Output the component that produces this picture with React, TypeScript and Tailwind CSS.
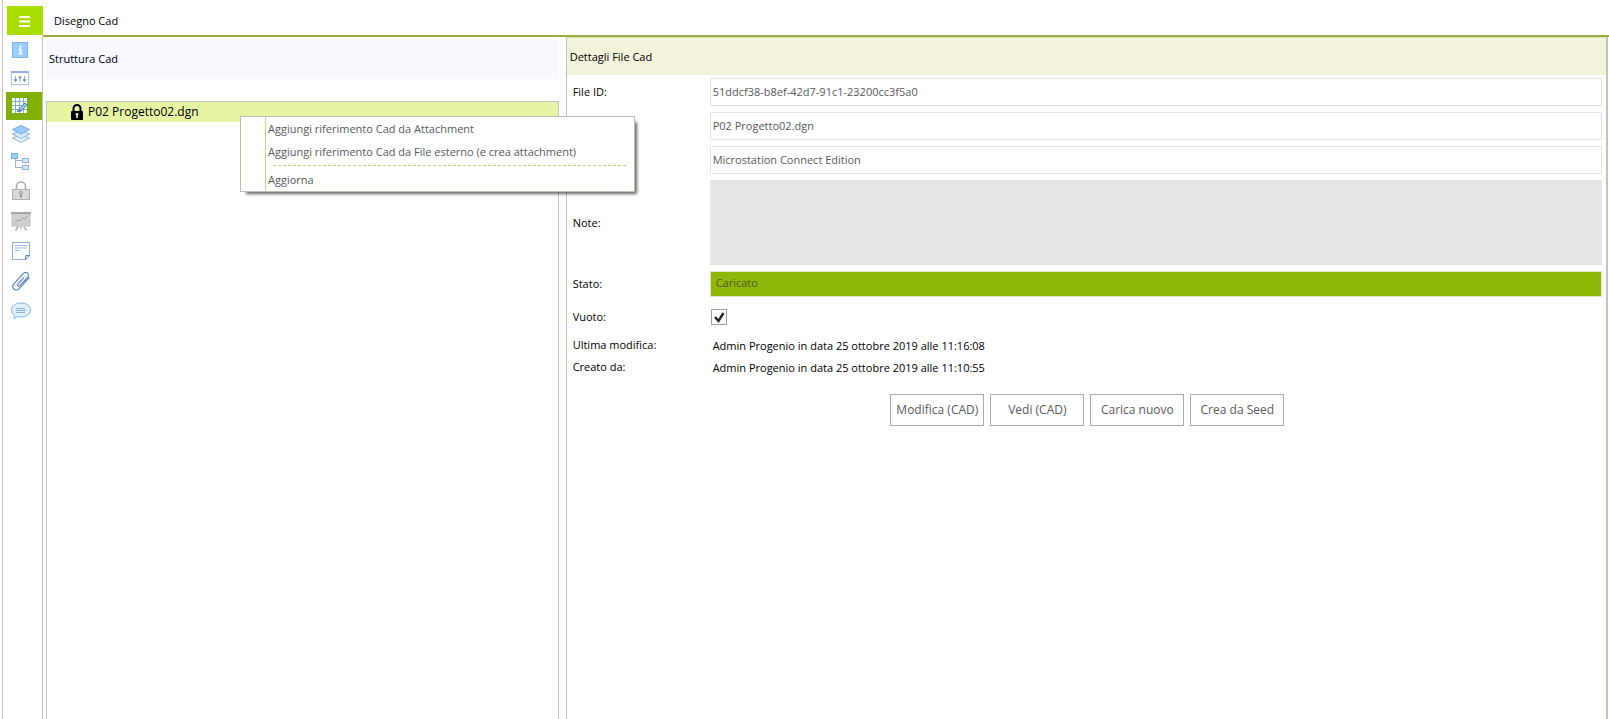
import { useState } from 'react';
import type { ReactNode } from 'react';
import clsx from 'clsx';

const InfoIcon = () => (
  <svg width="20" height="20" viewBox="0 0 20 20">
    <rect x="1.5" y="2.5" width="15" height="15" fill="#99ccff" stroke="#7fb5e8" />
    <path d="M8.5 5.5h2v2h-2zM7.5 8.5h3v5h1v1h-4v-1h1v-4h-1z" fill="#fff" />
  </svg>
);

const SettingsIcon = () => (
  <svg width="20" height="20" viewBox="0 0 20 20" fill="none">
    <rect x="0.5" y="3.5" width="17" height="13" stroke="#a9c6e6" fill="#fff" />
    <path d="M0 4h18" stroke="#8db4e0" strokeWidth="2" />
    <path d="M4.500 8v6.500M9 8v6.500M13.500 8v6.500" stroke="#9fb9dc" />
    <path d="M3 12h3M7.500 9.500h3M12 12h3" stroke="#7d9fd0" strokeWidth="2" />
  </svg>
);

const DrawingIcon = () => (
  <svg width="20" height="20" viewBox="0 0 20 20" fill="none">
    <rect x="1" y="2" width="15" height="15" fill="#fff" />
    <path d="M1 5.500h15M1 9.500h15M1 13.500h15M4.500 2v15M8.500 2v15M12.500 2v15" stroke="#7fb0cc" />
    <path d="M8 13.500l6-6.500 2 2-6 6z" fill="#99ccff" stroke="#3f7fc4" />
    <path d="M6.500 15.500L8 13.500l2 1.500z" fill="#3f7fc4" stroke="#3f7fc4" />
  </svg>
);

const LayersIcon = () => (
  <svg width="20" height="20" viewBox="0 0 20 20" strokeLinejoin="round">
    <path d="M1.500 14L10 10.500 18.500 14 10 18.500z" fill="#e3f1ff" stroke="#8fb6e0" />
    <path d="M1.500 10L10 6.500 18.500 10 10 14.500z" fill="#d3eaff" stroke="#8fb6e0" />
    <path d="M1.500 5.500L10 1.500 18.500 5.500 10 10z" fill="#99ccff" stroke="#79a9dd" />
  </svg>
);

const TreeIcon = () => (
  <svg width="20" height="20" viewBox="0 0 20 20" fill="none">
    <path d="M4.500 6v9.500H11M4.500 8.500H11" stroke="#9fb4cc" />
    <rect x="0.500" y="1.500" width="6" height="5" fill="#99ccff" stroke="#7fabdc" />
    <rect x="11.500" y="6.500" width="6" height="4" fill="#d3eaff" stroke="#8fb6e0" />
    <rect x="11.500" y="13.500" width="6" height="4" fill="#d3eaff" stroke="#8fb6e0" />
  </svg>
);

const LockIcon = () => (
  <svg width="20" height="20" viewBox="0 0 20 20" fill="none">
    <path d="M5.500 8V5.500a4.500 4.500 0 0 1 9 0V8" stroke="#a9a9a9" strokeWidth="1.500" />
    <rect x="1.500" y="8.500" width="17" height="10" fill="#d9d9d9" stroke="#b0b0b0" />
    <circle cx="10" cy="12" r="1.500" stroke="#999" />
    <path d="M10 13.500v3" stroke="#999" strokeWidth="2" />
  </svg>
);

const BoardIcon = () => (
  <svg width="20" height="20" viewBox="0 0 20 20" fill="none">
    <rect x="1" y="2" width="18" height="13" fill="#d0d0d0" stroke="#c0c0c0" />
    <path d="M0 2h20" stroke="#a6a6a6" strokeWidth="2" />
    <path d="M4 11.500l3-2.500 2 1 3-3 1.500 1L16.500 5" stroke="#a0a0a0" />
    <path d="M7 15.500l-2.500 4M13 15.500l2.500 4M10 15.500v2" stroke="#b0b0b0" strokeWidth="1.500" />
  </svg>
);

const NoteIcon = () => (
  <svg width="20" height="20" viewBox="0 0 20 20" fill="none">
    <path d="M1.500 1.500h17V14.500l-4 4h-13z" fill="#fff" stroke="#8fb0dc" />
    <path d="M18.500 14.500h-4v4z" fill="#d3eaff" stroke="#5d88c4" />
    <path d="M4 4.500h12M4 7h12M4 9.500h5" stroke="#9fbbe2" />
  </svg>
);

const ClipIcon = () => (
  <svg width="20" height="20" viewBox="0 0 20 20" fill="none" stroke="#5b88c2" strokeLinecap="round">
    <path d="M12.500 7l-5.500 6c-1.200 1.500.6 3 1.900 1.700L16.500 6.500c3-3.300-1.300-7-4.300-3.800L2.800 12.800c-3.300 3.900 1.900 8.500 5.300 4.800l10-10.800" strokeWidth="1.200" />
    <path d="M14 4.500l-9.700 10" stroke="#b7d2f2" />
  </svg>
);

const ChatIcon = () => (
  <svg width="20" height="20" viewBox="0 0 20 20" fill="none">
    <path d="M10 2c5.500 0 9.500 3 9.500 7s-4 7-9.500 7c-1.500 0-2.700-.2-3.800-.5L3 18l.5-3.700C1.700 13 .5 11.200.5 9 .5 5 4.500 2 10 2z" fill="#dff1ff" stroke="#86b4e4" />
    <path d="M5 7.500h9M5 9.500h10M5 11.500h9" stroke="#8fb0dc" />
  </svg>
);

const Padlock = () => (
  <svg width="12" height="16" viewBox="0 0 12 16" fill="none">
    <path d="M2.500 8V4.500a3.500 3.500 0 0 1 7 0V8" stroke="#000" strokeWidth="2" />
    <rect y="7" width="12" height="9" rx="1" fill="#000" />
    <path d="M6 9a1.300 1.300 0 0 1 .8 2.400V14H5.200v-2.600A1.300 1.300 0 0 1 6 9z" fill="#e6f5a3" />
  </svg>
);

const navItems = [
  { id: 'info', label: 'Informazioni', icon: InfoIcon, size: 'h-7' },
  { id: 'settings', label: 'Impostazioni', icon: SettingsIcon, size: 'h-7' },
  { id: 'drawing', label: 'Disegno Cad', icon: DrawingIcon, size: 'h-7' },
  { id: 'layers', label: 'Livelli', icon: LayersIcon, size: 'h-7' },
  { id: 'tree', label: 'Struttura', icon: TreeIcon, size: 'h-7' },
  { id: 'lock', label: 'Permessi', icon: LockIcon, size: 'h-[30px]' },
  { id: 'board', label: 'Presentazione', icon: BoardIcon, size: 'h-[30px]' },
  { id: 'note', label: 'Note', icon: NoteIcon, size: 'h-[30px]' },
  { id: 'clip', label: 'Allegati', icon: ClipIcon, size: 'h-[30px]' },
  { id: 'chat', label: 'Commenti', icon: ChatIcon, size: 'h-[30px]' },
];

const actions = ['Modifica (CAD)', 'Vedi (CAD)', 'Carica nuovo', 'Crea da Seed'];

const fieldClass = 'h-7 w-full border border-[#e3e3e6] bg-white px-0.5 pb-0.5 text-[#5a5a5a] outline-none';

function MenuItem({ children }: { children: ReactNode }) {
  return (
    <button role="menuitem" className="block h-[23px] w-full pl-[27px] text-left hover:bg-[#e6f5a3]">
      {children}
    </button>
  );
}

function ContextMenu() {
  return (
    <div
      role="menu"
      className="absolute top-3.5 left-[193px] z-10 w-[395px] border border-[#bdbfae] bg-white text-[#5a5a5a] shadow-[4px_4px_3px_-2px_rgba(0,0,0,0.6)]"
    >
      <div className="absolute inset-y-0 left-6 border-l border-[#c5d68a]" />
      <MenuItem>Aggiungi riferimento Cad da Attachment</MenuItem>
      <MenuItem>Aggiungi riferimento Cad da File esterno (e crea attachment)</MenuItem>
      <div className="mt-0.5 mr-2 mb-0.5 ml-8 border-t border-dashed border-[#c5d68a]" />
      <MenuItem>Aggiorna</MenuItem>
    </div>
  );
}

export default function App() {
  const [active, setActive] = useState('drawing');
  const [empty, setEmpty] = useState(true);

  return (
    <div className="flex min-h-screen bg-white pl-0.5 font-['Open_Sans','Noto_Sans',sans-serif] text-[11px] leading-4 text-black">
      <aside className="flex w-[41px] shrink-0 flex-col border-l border-[#c4c4bc] pt-1.5">
        <button aria-label="Menu" className="mb-px ml-1 flex h-[29px] w-9 items-center justify-center bg-[#aadd00]">
          <svg width="12" height="12" viewBox="0 0 12 12" stroke="#fff" strokeWidth="2">
            <path d="M0 2h11M0 6.500h11M0 11h11" />
          </svg>
        </button>
        <nav className="flex flex-1 flex-col border-r border-[#c4c4bc] pl-[3px]">
          {navItems.map((item) => (
            <button
              key={item.id}
              aria-label={item.label}
              onClick={() => setActive(item.id)}
              className={clsx('flex w-full items-center pl-[5px]', item.size, active === item.id && 'bg-[#80b100]')}
            >
              <item.icon />
            </button>
          ))}
        </nav>
      </aside>

      <div className="flex min-w-0 flex-1 flex-col">
        <header className="flex h-[37px] items-center border-b-2 border-[#98ac4a] pt-1.5 pl-[11px]">
          <h1>Disegno Cad</h1>
        </header>

        <main className="flex flex-1 pr-px">
          <section className="flex w-1/3 shrink-0 flex-col pt-0.5 pr-1.5 pl-[3px]">
            <h2 className="flex h-10 items-center bg-[#f8f8ff] pl-[3px]">Struttura Cad</h2>
            <div className="mt-[22px] flex-1 border-x border-t border-[#c4c4bc]">
              <div className="relative">
                <div className="flex h-5 items-center gap-[5px] bg-[#e6f5a3] pl-6">
                  <Padlock />
                  <span className="text-xs">P02 Progetto02.dgn</span>
                </div>
                <ContextMenu />
              </div>
            </div>
          </section>

          <section className="ml-px min-w-0 flex-1 border-t border-r-2 border-l border-t-[#d5e4a0] border-x-[#c4c4bc]">
            <h2 className="flex h-[37px] items-center bg-[#f3f3dc] pl-[3px]">Dettagli File Cad</h2>

            <form onSubmit={(e) => e.preventDefault()} className="pt-[3px] pr-1 pl-1.5">
              <div className="grid grid-cols-[137px_1fr] items-center gap-y-1.5">
                <label htmlFor="fileId">File ID:</label>
                <input id="fileId" readOnly value="51ddcf38-b8ef-42d7-91c1-23200cc3f5a0" className={fieldClass} />
                <input aria-label="Nome file" defaultValue="P02 Progetto02.dgn" className={clsx(fieldClass, 'col-start-2')} />
                <input aria-label="Formato" defaultValue="Microstation Connect Edition" className={clsx(fieldClass, 'col-start-2')} />
                <label htmlFor="note">Note:</label>
                <textarea id="note" className="block h-[85px] w-full resize-none bg-[#e5e5e5] outline-none" />
                <label htmlFor="stato">Stato:</label>
                <input
                  id="stato"
                  readOnly
                  value="Caricato"
                  className="h-[26px] w-full border border-[#dfe9bd] bg-[#8fb80b] px-[5px] pb-1 text-[#4d5a20] outline-none"
                />
              </div>

              <div className="grid grid-cols-[137px_1fr] items-center pt-2">
                <label htmlFor="vuoto">Vuoto:</label>
                <span className="relative ml-px flex h-6 w-4 items-center">
                  <input
                    id="vuoto"
                    type="checkbox"
                    checked={empty}
                    onChange={(e) => setEmpty(e.target.checked)}
                    className="size-4 appearance-none border border-[#a0a0a0] bg-white"
                  />
                  {empty && (
                    <svg className="pointer-events-none absolute left-0" width="16" height="16" viewBox="0 0 16 16" fill="none">
                      <path d="M4 8l3.500 4L12.500 4" stroke="#222" strokeWidth="2.400" />
                    </svg>
                  )}
                </span>
              </div>

              <dl className="grid grid-cols-[137px_1fr] gap-y-[5px] pt-2">
                <dt>Ultima modifica:</dt>
                <dd className="pt-px pl-[3px]">Admin Progenio in data 25 ottobre 2019 alle 11:16:08</dd>
                <dt>Creato da:</dt>
                <dd className="pt-px pl-[3px]">Admin Progenio in data 25 ottobre 2019 alle 11:10:55</dd>
              </dl>

              <div className="flex justify-center gap-1.5 pt-[18px]">
                {actions.map((action) => (
                  <button key={action} type="button" className="h-8 w-[94px] border border-[#ababab] bg-white text-xs text-[#5a5a5a]">
                    {action}
                  </button>
                ))}
              </div>
            </form>
          </section>
        </main>
      </div>
    </div>
  );
}
